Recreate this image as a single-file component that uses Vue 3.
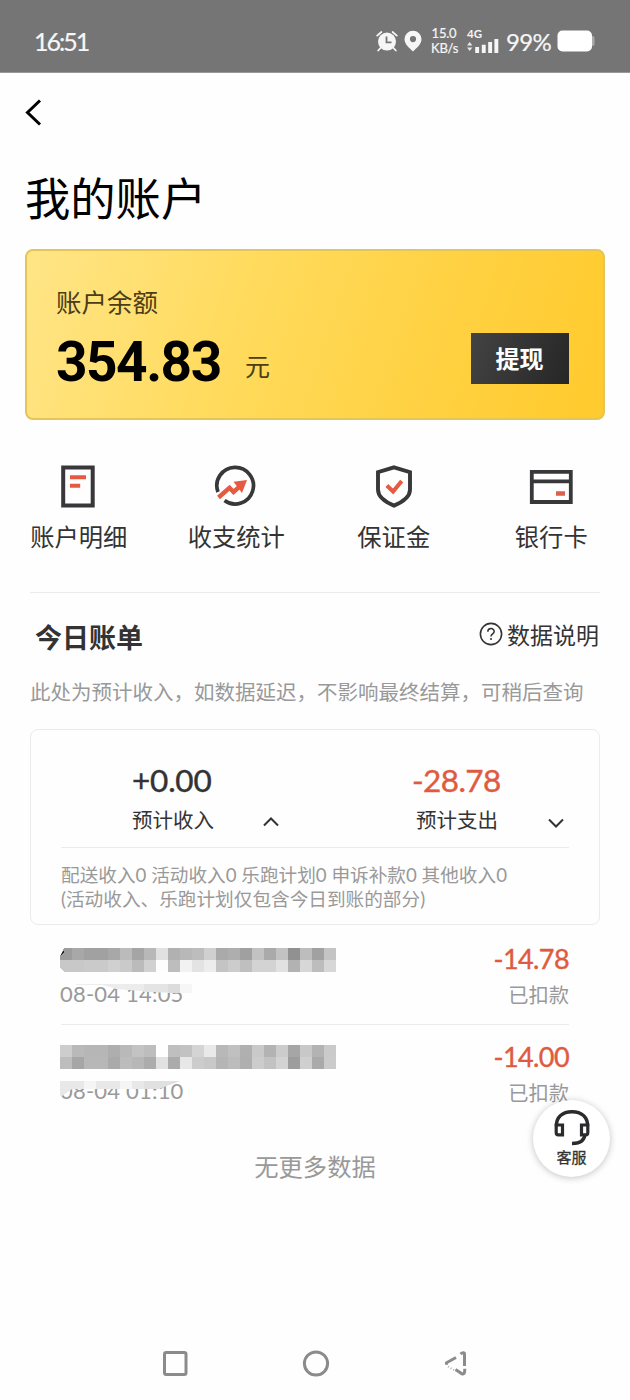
<script setup>
const rowA = ['9c', 'a8', 'a1', 'a1', 'a8', 'bb', 'a5', 'b8', 'e1', 'b1', 'b8', 'bd', 'd0', 'aa', 'ae', 'a0', 'c2', 'aa', 'c2', '91', 'bd', 'a1', 'c4']
const rowB = ['c8', 'c8', 'ca', 'ca', 'd0', 'ca', 'bb', 'd1', 'fd', 'bd', 'f2', 'e3', 'ed', 'c4', 'cc', 'bf', 'd3', 'd3', 'e1', 'b2', 'd7', 'bd', 'd7']
const rowC = ['cd', 'b9', 'b6', 'b6', 'ae', 'b9', 'c3', 'bd', 'fe', 'bf', 'c2', 'd4', 'e9', 'b8', 'c0', 'b0', 'c9', 'b3', 'cc', 'a6', 'c8', 'b3', 'ca']
const rowD = ['bd', 'a6', 'b7', 'b7', 'aa', 'bc', 'b7', 'ac', 'e1', 'ab', 'e7', 'cc', 'c8', 'b5', 'bc', 'af', 'cc', 'c2', 'd3', '9d', 'cf', 'aa', 'cb']
const entries = [
  { time: '08-04 14:05', amount: '-14.78', rows: [rowA, rowB] },
  { time: '08-04 01:10', amount: '-14.00', rows: [rowC, rowD] },
]
const gray = (v) => '#' + v + v + v
</script>

<template>
  <div class="screen">
    <header class="status">
      <span class="clock">16:51</span>
      <div class="indicators">
        <svg class="alarm" width="22" height="22" viewBox="0 0 22 22">
          <circle cx="11" cy="11.6" r="9" fill="#f6f6f6" />
          <path d="M1.2 5.6 5.4 2M20.8 5.6 16.600 2M4.500 18l-2.300 2.500M17.500 18l2.300 2.500" stroke="#f6f6f6" stroke-width="1.800" stroke-linecap="round" />
          <path d="M10.500 6.500v5.800h5" fill="none" stroke="#757575" stroke-width="1.800" />
        </svg>
        <svg class="pin" width="18" height="22" viewBox="0 0 18 22">
          <path fill-rule="evenodd" d="M9 .8a8.500 8.500 0 0 0-8.500 8.500C.500 14.500 5.500 18 9 21.500c3.500-3.500 8.500-7 8.500-12.200A8.500 8.500 0 0 0 9 .8Zm0 5.200a3.100 3.100 0 1 1 0 6.200A3.100 3.100 0 0 1 9 6Z" fill="#f6f6f6" />
        </svg>
        <div class="speed"><span>15.0</span><span>KB/s</span></div>
        <div class="network">
          <span>4G</span>
          <svg width="32" height="15" viewBox="0 0 32 15">
            <path d="m0 6.500 2.700-3.500 2.700 3.500zM0 8.500h5.400L2.700 12z" fill="#e8e8e8" />
            <path d="M8.200 8h3.900v6H8.200zM14.800 5.800h3.900V14h-3.900zM21.200 3h3.900v11h-3.900zM27.400 0h3.900v14h-3.900z" fill="#f6f6f6" />
          </svg>
        </div>
        <span class="percent">99%</span>
        <svg class="battery" width="38" height="22" viewBox="0 0 38 22">
          <rect x="34" y="6" width="3.500" height="10" rx="1.800" fill="#aaa" />
          <rect x=".500" y=".500" width="34.500" height="21" rx="5" fill="#fff" />
        </svg>
      </div>
    </header>

    <nav class="nav">
      <svg width="18" height="28" viewBox="0 0 18 28"><path d="M16 2.500 3.500 14.500 16 26.500" fill="none" stroke="#000" stroke-width="3" /></svg>
    </nav>
    <h1>我的账户</h1>

    <section class="balance">
      <div class="label">账户余额</div>
      <div class="money"><b>354.83</b><span>元</span></div>
      <button>提现</button>
    </section>

    <section class="menu">
      <div class="item">
        <svg width="46" height="46" viewBox="0 0 46 46">
          <rect x="7.200" y="4.500" width="29.500" height="38" fill="none" stroke="#38383a" stroke-width="4" />
          <path d="M14 14.200h16M14 22.700h10.200" stroke="#e45b42" stroke-width="4" />
        </svg>
        <span>账户明细</span>
      </div>
      <div class="item">
        <svg width="46" height="46" viewBox="0 0 46 46">
          <path d="M5 29A18.300 18.300 0 1 1 11.500 37.500" fill="none" stroke="#38383a" stroke-width="3.700" />
          <path d="m5.500 34.500 11-9.700 4 4.200 8.500-7.500" fill="none" stroke="#e45b42" stroke-width="4.400" />
          <path d="M20.500 18.800 34 17 29 30z" fill="#e45b42" />
        </svg>
        <span>收支统计</span>
      </div>
      <div class="item">
        <svg width="46" height="46" viewBox="0 0 46 46">
          <path d="M23 4.400 39 9.200v17.500c0 7.200-8 12.500-16 15.900-8-3.400-16-8.700-16-15.900V9.200z" fill="none" stroke="#38383a" stroke-width="3.900" />
          <path d="m15.800 22.500 6.300 6 8.600-10.500" fill="none" stroke="#e45b42" stroke-width="4" />
        </svg>
        <span>保证金</span>
      </div>
      <div class="item">
        <svg width="46" height="46" viewBox="0 0 46 46">
          <path d="M3.800 8.800h39v30.200h-39zM3.800 18.300h39" fill="none" stroke="#38383a" stroke-width="3.800" />
          <path d="M28 30.500h9" stroke="#d9614d" stroke-width="4.500" />
        </svg>
        <span>银行卡</span>
      </div>
    </section>

    <section class="today">
      <h2>今日账单</h2>
      <div class="explain">
        <svg width="24" height="24" viewBox="0 0 24 24">
          <circle cx="12" cy="12" r="10.600" fill="none" stroke="#333" stroke-width="1.600" />
          <path d="M8.800 9.800c0-4.300 6.400-4.200 6.400-.300 0 2.300-3.200 2.500-3.200 5M12 16v2" fill="none" stroke="#333" stroke-width="1.500" />
        </svg>
        <span>数据说明</span>
      </div>
    </section>
    <p class="notice">此处为预计收入，如数据延迟，不影响最终结算，可稍后查询</p>

    <section class="summary">
      <div class="totals">
        <div class="total">
          <div class="sum">+0.00</div>
          <div class="name">预计收入</div>
          <svg width="18" height="12" viewBox="0 0 18 12"><path d="m2 9.500 7-7 7 7" fill="none" stroke="#333" stroke-width="2" /></svg>
        </div>
        <div class="total out">
          <div class="sum">-28.78</div>
          <div class="name">预计支出</div>
          <svg width="18" height="12" viewBox="0 0 18 12"><path d="m2 2.500 7 7 7-7" fill="none" stroke="#333" stroke-width="2" /></svg>
        </div>
      </div>
      <p class="breakdown">
        <span class="first">配送收入0 活动收入0 乐跑计划0 申诉补款0 其他收入0</span>
        <span>(活动收入、乐跑计划仅包含今日到账的部分)</span>
      </p>
    </section>

    <section class="list">
      <div v-for="(entry, i) in entries" :key="entry.time" class="entry">
        <div class="left">
          <svg class="masked" width="276" height="24" viewBox="0 0 276 24" shape-rendering="crispEdges">
            <g v-for="(row, y) in entry.rows" :key="y">
              <rect v-for="(v, x) in row" :key="x" :x="x * 12" :y="y * 12" width="12" height="12" :fill="gray(v)" />
            </g>
            <path v-if="i === 0" d="M0 0h4L0 8zM0 20l4 4H0z" fill="#fff" />
            <path v-if="i === 0" d="m1 7 3-5v3z" fill="#222" />
          </svg>
          <div class="time">{{ entry.time }}
            <svg v-if="i === 0" class="veil" width="140" height="14" viewBox="0 0 140 14">
              <path d="M16 0h92v1H16z" fill="#eee" />
              <path d="M40 0h92v9h-24l-28-2-24-2z" fill="#ececec" />
              <path d="M84 0h24v8H84z" fill="#e4e4e4" /><path d="M108 0h12v9h-12z" fill="#dcdcdc" /><path d="M120 0h12v9h-12z" fill="#f6f6f6" />
            </svg>
            <svg v-else class="veil second" width="124" height="16" viewBox="0 0 124 16">
              <path d="M0 0h120L98 8H12L2 15H0z" fill="#e8e8e8" />
              <path d="M24 0h12v8H24zM60 0h12v8H60z" fill="#f5f5f5" /><path d="M84 0h36L98 8H84z" fill="#e0e0e0" />
            </svg>
          </div>
        </div>
        <div class="right">
          <div class="fee">{{ entry.amount }}</div>
          <div class="state">已扣款</div>
        </div>
      </div>
    </section>
    <p class="end">无更多数据</p>

    <div class="service">
      <svg width="38" height="38" viewBox="0 0 38 38">
        <path d="M3.500 17.500C3 8 9.500 2.800 19 2.800S35 8 34.500 17.500M32 24c0 7-4.500 10.500-13 10.500" fill="none" stroke="#2b2b2d" stroke-width="3.400" />
        <path d="M3.200 16h6.300v9.800h-4.300a2 2 0 0 1-2-2zM34.800 16h-6.300v9.800h4.300a2 2 0 0 0 2-2z" fill="#fff" stroke="#2b2b2d" stroke-width="3.200" />
      </svg>
      <span>客服</span>
    </div>

    <footer class="keys">
      <svg width="28" height="28" viewBox="0 0 28 28"><rect x="3.500" y="2.500" width="21.500" height="22" rx="1.800" fill="none" stroke="#8b8b8b" stroke-width="3" /></svg>
      <svg width="28" height="28" viewBox="0 0 28 28"><circle cx="14" cy="13.500" r="11.600" fill="none" stroke="#8b8b8b" stroke-width="3" /></svg>
      <svg class="back-key" width="28" height="28" viewBox="0 0 28 28">
        <path d="M13 7.500 3.500 12.800v2M17.500 4c2-1.800 4-1.500 4 0V16M12.500 19.500l6.500 4.300c2 .8 2.800-.3 2.800-5" fill="none" stroke="#8b8b8b" stroke-width="3" />
        <path d="M5 16.500l6 3.500" fill="none" stroke="#aaa" stroke-width="2" stroke-dasharray="1 2" />
      </svg>
    </footer>
  </div>
</template>

<style>
body { background: #fefefe; }
</style>

<style scoped>
* { box-sizing: border-box; }
.screen { position: relative; width: 630px; height: 1400px; overflow: hidden; background: #fefefe; color: #333; font-family: Lato, "Noto Sans CJK SC", sans-serif; display: flex; flex-direction: column; }
h1, h2, p { margin: 0; font-weight: 400; }
svg { display: block; flex: none; }
span, div, p, h1, h2 { white-space: nowrap; }

.status { height: 73px; flex: none; background: #757575; color: #f6f6f6; display: flex; justify-content: space-between; padding: 9px 35px 0 34px; border-bottom: 1px solid #999; }
.clock { font-size: 25px; line-height: 64px; letter-spacing: -2px; -webkit-text-stroke: .2px; }
.indicators { display: flex; align-items: center; height: 64px; }
.pin { margin-left: 6px; }
.speed { display: flex; flex-direction: column; width: 26px; margin-left: 9px; font-size: 13px; line-height: 15px; letter-spacing: -.2px; text-align: center; -webkit-text-stroke: .2px; }
.network { width: 32px; margin-left: 10px; font-size: 11.500px; line-height: 11px; font-weight: 700; }
.percent { width: 45px; margin-left: 7px; font-size: 24px; letter-spacing: -.7px; -webkit-text-stroke: .2px; }
.battery { margin-left: 6px; }

.nav { height: 79px; flex: none; padding: 25px 0 0 24px; }
h1 { height: 97px; padding-left: 25px; font-size: 45.300px; line-height: 93px; color: #000; flex: none; }

.balance { position: relative; height: 171px; flex: none; margin: 0 25px; border: 2px solid #e3c558; border-radius: 8px; background: linear-gradient(108deg, #ffe587 0%, #ffdb5e 36%, #ffd347 64%, #ffca2c 100%); padding: 33px 0 0 29px; }
.label { font-size: 25.500px; line-height: 37px; color: #4b3d16; }
.money { display: flex; height: 64px; margin-top: 9px; }
.money b { font: 700 55px/64px Roboto, sans-serif; color: #000; width: 189px; letter-spacing: -1.500px; }
.money span { font-size: 25px; line-height: 72px; color: #4b3d16; }
.balance button { position: absolute; right: 34.500px; top: 82px; width: 98px; height: 51px; border: 0; padding: 0 0 2px; background: linear-gradient(110deg, #434343, #262626); color: #fff; font: 700 24px/49px "Noto Sans CJK SC", sans-serif; }

.menu { display: grid; grid-template-columns: repeat(4, 157.500px); margin-top: 43px; height: 129px; flex: none; }
.item { display: flex; flex-direction: column; align-items: center; font-size: 24.300px; line-height: 36px; }
.item span { margin-top: 10px; }

.today { height: 85px; flex: none; margin: 0 30px; border-top: 1px solid #ebebeb; padding-left: 5px; display: flex; justify-content: space-between; }
.today h2 { font-size: 27px; line-height: 90px; font-weight: 700; }
.explain { display: flex; align-items: center; height: 81px; gap: 4px; font-size: 23px; margin-right: 1px; }
.notice { height: 52px; flex: none; padding-left: 30px; font-size: 20.500px; line-height: 30px; color: #999; }

.summary { height: 196px; flex: none; margin: 0 30px; border: 1px solid #ebebeb; border-radius: 8px; padding: 0 30px; }
.totals { height: 118px; border-bottom: 1px solid #ebebeb; display: grid; grid-template-columns: 284px 1fr; padding-top: 30px; }
.total { display: grid; grid-template-columns: 1fr 18px; grid-template-rows: 40px 38px; padding: 0 83px 0 71px; align-items: center; margin-right: -18px; }
.total.out { margin-right: 0; padding: 0 4px 0 71px; }
.sum { grid-column: 1 / 3; font-size: 31.500px; letter-spacing: -.2px; -webkit-text-stroke: .4px; }
.out .sum { color: #df5b40; margin-left: -4px; letter-spacing: -.6px; }
.name { font-size: 20.500px; }
.total svg { margin-top: 6px; }
.total.out svg { margin-top: 8px; }
.breakdown { padding-top: 16px; font-size: 18.650px; line-height: 23.500px; color: #999; display: flex; flex-direction: column; }

.list { margin: 0 61px; height: 198px; flex: none; }
.entry { height: 100px; display: flex; justify-content: space-between; border-bottom: 1px solid #ebebeb; padding-top: 16px; }
.entry:last-child { border: 0; padding-top: 13px; }
.left { margin-left: -1px; padding-top: 7px; }
.time { position: relative; font-size: 22px; line-height: 28px; margin-top: 8px; color: #999; letter-spacing: .2px; }
.veil { position: absolute; left: 0; top: 4px; }
.right { text-align: right; }
.entry:last-child .right { padding-top: 1px; }
.fee { font-size: 27px; line-height: 36px; color: #df5b40; letter-spacing: -.6px; -webkit-text-stroke: .4px; }
.state { font-size: 20.300px; line-height: 30px; margin-top: 3px; color: #999; }
.end { margin-top: 26px; height: 36px; text-align: center; font-size: 24.300px; line-height: 36px; color: #999; }

.service { position: absolute; left: 533px; top: 1100px; width: 77px; height: 77px; border-radius: 50%; background: #fff; box-shadow: 0 1px 7px rgba(0, 0, 0, .24); display: flex; flex-direction: column; align-items: center; padding-top: 9px; }
.service span { font-size: 15px; line-height: 20px; -webkit-text-stroke: .3px; }
.keys { margin-top: auto; height: 50px; padding: 0 159px 0 161px; display: flex; justify-content: space-between; }
</style>
